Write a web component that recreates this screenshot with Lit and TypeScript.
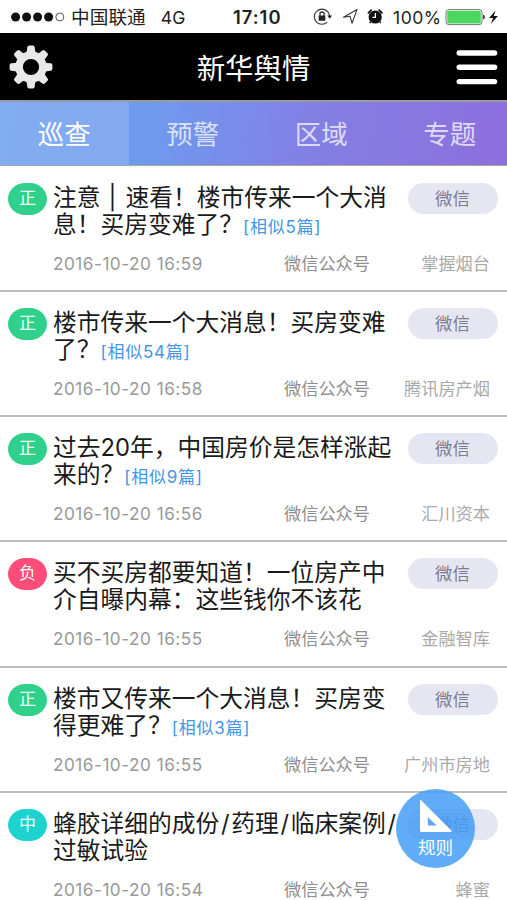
import { LitElement, html, css, svg, nothing } from "lit";
import { customElement, property } from "lit/decorators.js";
import { classMap } from "lit/directives/class-map.js";

interface NewsItem {
  tone: "正" | "负" | "中";
  first: string;
  second: string;
  similar?: string;
  time: string;
  author: string;
}

const NEWS: NewsItem[] = [
  { tone: "正", first: "注意 | 速看！楼市传来一个大消", second: "息！买房变难了？", similar: "[相似5篇]", time: "2016-10-20 16:59", author: "掌握烟台" },
  { tone: "正", first: "楼市传来一个大消息！买房变难", second: "了？", similar: "[相似54篇]", time: "2016-10-20 16:58", author: "腾讯房产烟" },
  { tone: "正", first: "过去20年，中国房价是怎样涨起", second: "来的？", similar: "[相似9篇]", time: "2016-10-20 16:56", author: "汇川资本" },
  { tone: "负", first: "买不买房都要知道！一位房产中", second: "介自曝内幕：这些钱你不该花", time: "2016-10-20 16:55", author: "金融智库" },
  { tone: "正", first: "楼市又传来一个大消息！买房变", second: "得更难了？", similar: "[相似3篇]", time: "2016-10-20 16:55", author: "广州市房地" },
  { tone: "中", first: "蜂胶详细的成份/药理/临床案例/", second: "过敏试验", time: "2016-10-20 16:54", author: "蜂蜜" },
];

@customElement("status-bar")
class StatusBar extends LitElement {
  static styles = css`
    :host { display: flex; align-items: center; height: 33px; box-sizing: border-box; padding: 1px 8px 0 11px; background: #fff; color: #222; font-size: 17.6px; position: relative; }
    .dots { width: 54px; height: 10px; }
    .carrier { margin-left: 6px; font-size: 18.6px; letter-spacing: 0.1px; line-height: 30px; }
    .net { margin-left: 15px; }
    .clock { position: absolute; left: 233px; top: 1px; line-height: 32px; font-weight: 600; font-size: 18.4px; letter-spacing: 1px; }
    .right { margin-left: auto; display: flex; align-items: center; }
    .icons { width: 72px; height: 20px; }
    .pct { margin-left: 8px; width: 48px; white-space: nowrap; letter-spacing: 0.5px; }
    .battery { width: 54px; height: 20px; margin-left: 4px; }
  `;
  render() {
    return html`
      <svg class="dots" viewBox="0 0 54 10">
        ${[0, 1, 2, 3].map((i) => svg`<circle cx=${4.6 + i * 11} cy="5" r="4.5" fill="#111" />`)}
        <circle cx="48.8" cy="5" r="4" fill="none" stroke="#444" stroke-width="0.9" />
      </svg>
      <span class="carrier">中国联通</span><span class="net">4G</span>
      <span class="clock">17:10</span>
      <div class="right">
        <svg class="icons" viewBox="314 7 72 20">
          <g fill="none" stroke="#333" stroke-width="1.1">
            <path d="M328.3 11.3A7.6 7.6 0 1 0 328.3 22.1M325.8 9.8A7.6 7.6 0 0 1 330.6 16.2" />
            <path d="M321 16v-2a2 2 0 0 1 4 0v2" stroke-width="1.3" />
            <path d="M344.5 17.3L358 9.6L353 23.2L351 16.2Z" stroke-linejoin="round" />
          </g>
          <path d="M319.7 15.5h6.6v5.3h-6.6zM328.3 15.6h4.8l-2.4 3.2z" fill="#222" />
          <circle cx="376.2" cy="17" r="6.6" fill="#111" />
          <path d="M369.4 12.8l2.8-2.6M383 12.8l-2.8-2.6" stroke="#111" stroke-width="1.8" stroke-linecap="round" />
          <path d="M371.8 21.6l-1.2 1.6M380.6 21.6l1.2 1.6" stroke="#111" stroke-width="1.4" />
          <path d="M376.4 13v4.3h-3" fill="none" stroke="#fff" stroke-width="1.2" />
        </svg>
        <span class="pct">100%</span>
        <svg class="battery" viewBox="446 7 54 20">
          <rect x="447" y="9.6" width="36" height="15" rx="2.8" fill="#fff" stroke="#777" />
          <rect x="448.2" y="10.7" width="33.6" height="12.8" rx="1.6" fill="#4cd760" />
          <path d="M484 14.5q2 .5 2 2.5t-2 2.5z" fill="#444" />
          <path d="M496.6 10.5l-6.5 7.5h4l-2.2 5.7 7-7.7h-4.2z" fill="#111" />
        </svg>
      </div>
    `;
  }
}

@customElement("title-bar")
class TitleBar extends LitElement {
  static styles = css`
    :host { display: flex; align-items: center; justify-content: space-between; height: 67px; padding: 0 9px; background: #000; color: #fff; }
    .gear { width: 44px; height: 44px; }
    .title { font-size: 28.4px; line-height: 67px; padding-top: 4px; }
    .menu { width: 42px; height: 36px; margin-left: 2px; }
  `;
  render() {
    return html`
      <svg class="gear" viewBox="-22 -22 44 44">
        <g fill="#e8e8e8">
          ${[0, 45, 90, 135, 180, 225, 270, 315].map(
            (a) => svg`<path transform="rotate(${a})" d="M-5.6 -13Q-3.8 -15.5 -3.7 -19.8Q-3.4 -21.4 -2 -21.4H2Q3.4 -21.4 3.7 -19.8Q3.8 -15.5 5.6 -13Z" />`,
          )}
        </g>
        <circle r="11.9" fill="none" stroke="#e8e8e8" stroke-width="7.6" />
      </svg>
      <span class="title">新华舆情</span>
      <svg class="menu" viewBox="0 0 42 36">
        <path d="M3.2 4h35.4M3.2 18.3h35.4M3.2 32.6h35.4" stroke="#fff" stroke-width="5.4" stroke-linecap="round" />
      </svg>
    `;
  }
}

@customElement("tab-strip")
class TabStrip extends LitElement {
  static styles = css`
    :host { display: flex; height: 66px; box-sizing: border-box; border-top: 2px solid #9a9aa6; border-bottom: 1px solid #a5a5b0; background: linear-gradient(100deg, #6da0ef 0%, #6f9aee 30%, #837fe3 62%, #8d6fdc 100%); overflow: hidden; }
    .tab { flex: none; width: 128.5px; text-align: center; font-size: 26.4px; line-height: 65px; color: rgba(255, 255, 255, 0.74); }
    .active { color: #fff; background: rgba(255, 255, 255, 0.14); }
  `;
  render() {
    return ["巡查", "预警", "区域", "专题"].map(
      (t, i) => html`<div class=${classMap({ tab: true, active: i === 0 })}>${t}</div>`,
    );
  }
}

@customElement("news-row")
class NewsRow extends LitElement {
  @property({ attribute: false }) item!: NewsItem;
  static styles = css`
    :host { display: grid; grid-template-columns: 38px 1fr 90px; grid-template-rows: 56px 24px; column-gap: 7px; row-gap: 13px; height: 125.2px; box-sizing: border-box; padding: 16px 9.5px 0 8px; border-bottom: 2px solid #bdbdbd; background: #fff; }
    .tone { height: 32px; margin-right: -1px; border-radius: 17px / 16px; color: #e9fff6; font-size: 17px; line-height: 31px; text-align: center; }
    .pos { background: #2fd08c; }
    .neg { background: #ff4c78; }
    .mid { background: #1cd3cf; }
    .title { padding-top: 1px; font-size: 23.75px; color: #1a1a1a; white-space: nowrap; min-width: 0; }
    .line { height: 27px; line-height: 27px; }
    .sep { letter-spacing: 1.2px; }
    .slash { display: inline-block; width: 12px; text-align: center; }
    .similar { font-size: 17px; color: #4496e6; letter-spacing: 0.75px; }
    .source { height: 31px; border-radius: 16px; background: #e6e6f3; color: #7c7c90; text-align: center; font-size: 17.4px; line-height: 31px; }
    .meta { grid-column: 2 / 4; display: grid; grid-template-columns: 231px auto 1fr; line-height: 24px; padding-right: 7.5px; font-size: 17.2px; color: #8e8e8e; white-space: nowrap; }
    .time { letter-spacing: 0.5px; color: #999; }
    .author { text-align: right; color: #aaa; }
  `;
  private titleText(text: string) {
    return text.split(/( \| |\/)/).map((part) => {
      if (part === "/") return html`<span class="slash">/</span>`;
      if (part === " | ") return html`<span class="sep"> | </span>`;
      return part;
    });
  }
  render() {
    const n = this.item;
    return html`
      <div class=${classMap({ tone: true, pos: n.tone === "正", neg: n.tone === "负", mid: n.tone === "中" })}>${n.tone}</div>
      <div class="title">
        <div class="line">${this.titleText(n.first)}</div>
        <div class="line">${n.second}${n.similar ? html`<span class="similar">${n.similar}</span>` : nothing}</div>
      </div>
      <div class="source">微信</div>
      <div class="meta">
        <span class="time">${n.time}</span><span>微信公众号</span><span class="author">${n.author}</span>
      </div>
    `;
  }
}

@customElement("rule-button")
class RuleButton extends LitElement {
  static styles = css`
    :host { display: flex; flex-direction: column; align-items: center; width: 79px; height: 79px; border-radius: 50%; background: rgba(66, 156, 245, 0.84); color: #fff; }
    svg { width: 34px; height: 34px; margin-top: 10px; }
    span { font-size: 17.6px; line-height: 26px; margin-top: 2px; }
  `;
  render() {
    return html`
      <svg viewBox="0 0 34 34"><path fill="#fff" fill-rule="evenodd" d="M1 2.2Q1 .2 2.6 1.8L32.4 31.5Q33 33 31.5 33H2.5Q1 33 1 31.5ZM8.8 18V26.5H17.6Z" /></svg>
      <span>规则</span>
    `;
  }
}

@customElement("app-root")
class AppRoot extends LitElement {
  static styles = css`
    :host { display: flex; flex-direction: column; width: 507px; height: 900px; overflow: hidden; position: relative; background: #fff; font-family: Inter, "Noto Sans CJK SC", sans-serif; }
    .list { flex: 1; min-height: 0; overflow: hidden; padding-top: 0.8px; }
    .float { position: absolute; left: 396px; top: 789px; }
  `;
  render() {
    return html`
      <status-bar></status-bar>
      <title-bar></title-bar>
      <tab-strip></tab-strip>
      <div class="list">${NEWS.map((n) => html`<news-row .item=${n}></news-row>`)}</div>
      <rule-button class="float"></rule-button>
    `;
  }
}
